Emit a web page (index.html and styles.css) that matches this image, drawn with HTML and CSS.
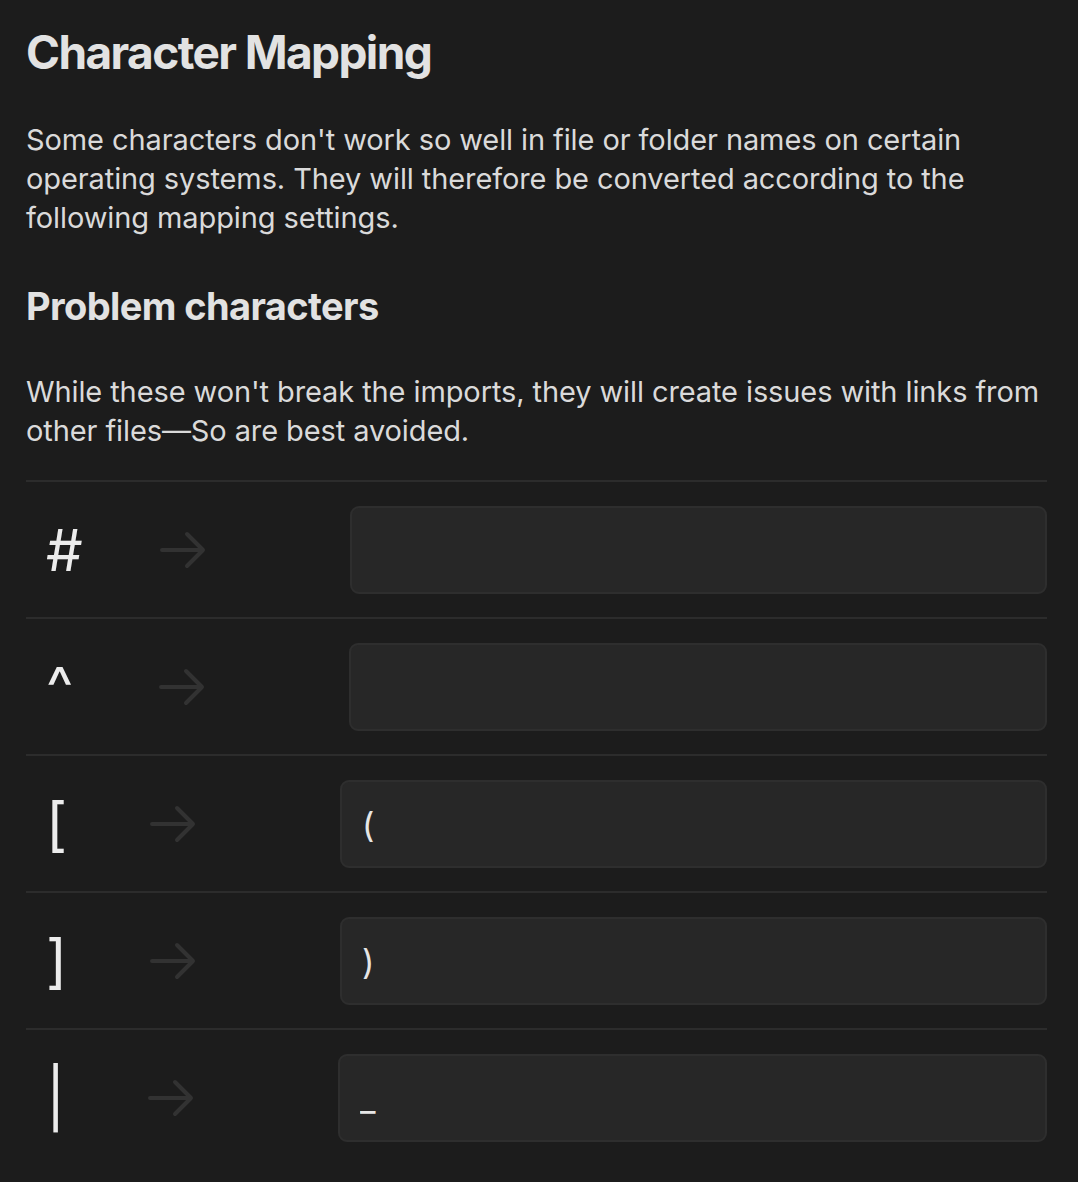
FILE: index.html
```html
<!DOCTYPE html>
<html lang="en">
<head>
<meta charset="utf-8">
<title>Character Mapping</title>
<link rel="stylesheet" href="styles.css">
</head>
<body>
<main class="page">
  <h1 class="title">Character Mapping</h1>
  <p class="desc">Some characters don't work so well in file or folder names on certain operating systems. They will therefore be converted according to the following mapping settings.</p>
  <h2 class="subtitle">Problem characters</h2>
  <p class="desc desc-2">While these won't break the imports, they will create issues with links from other files—So are best avoided.</p>
  <div class="rows">
    <div class="row">
      <span class="key key-wide">#</span>
      <svg class="arrow" viewBox="0 0 46 38" width="46" height="38"><path d="M2 19 H43 M27 3 L43 19 L27 35" fill="none" stroke="#323232" stroke-width="4" stroke-linecap="round" stroke-linejoin="round"/></svg>
      <input class="field" type="text" value="">
    </div>
    <div class="row">
      <span class="key key-wide">^</span>
      <svg class="arrow" viewBox="0 0 46 38" width="46" height="38"><path d="M2 19 H43 M27 3 L43 19 L27 35" fill="none" stroke="#323232" stroke-width="4" stroke-linecap="round" stroke-linejoin="round"/></svg>
      <input class="field" type="text" value="">
    </div>
    <div class="row">
      <span class="key">[</span>
      <svg class="arrow" viewBox="0 0 46 38" width="46" height="38"><path d="M2 19 H43 M27 3 L43 19 L27 35" fill="none" stroke="#323232" stroke-width="4" stroke-linecap="round" stroke-linejoin="round"/></svg>
      <input class="field" type="text" value="(">
    </div>
    <div class="row">
      <span class="key">]</span>
      <svg class="arrow" viewBox="0 0 46 38" width="46" height="38"><path d="M2 19 H43 M27 3 L43 19 L27 35" fill="none" stroke="#323232" stroke-width="4" stroke-linecap="round" stroke-linejoin="round"/></svg>
      <input class="field" type="text" value=")">
    </div>
    <div class="row">
      <span class="key key-narrow">|</span>
      <svg class="arrow" viewBox="0 0 46 38" width="46" height="38"><path d="M2 19 H43 M27 3 L43 19 L27 35" fill="none" stroke="#323232" stroke-width="4" stroke-linecap="round" stroke-linejoin="round"/></svg>
      <input class="field" type="text" value="_">
    </div>
  </div>
</main>
</body>
</html>
```
FILE: styles.css
```css
html, body {
  margin: 0;
  padding: 0;
  background: #1c1c1c;
}
body {
  font-family: Inter, "Noto Sans", sans-serif;
  color: #dadada;
}
.page {
  padding: 26px 31px 0 26px;
}
.title {
  margin: 0;
  font-size: 46px;
  font-weight: 700;
  letter-spacing: -1.6px;
  line-height: 52px;
  color: #e2e2e2;
}
.desc {
  margin: 42px -20px 0 0;
  font-size: 29px;
  line-height: 39px;
  font-weight: 400;
  letter-spacing: -0.1px;
}
.subtitle {
  margin: 46px 0 0;
  font-size: 38px;
  line-height: 46px;
  font-weight: 700;
  letter-spacing: -0.6px;
  color: #e2e2e2;
}
.desc-2 {
  margin-top: 43px;
}
.rows {
  margin-top: 30px;
}
.row {
  display: flex;
  align-items: center;
  border-top: 2px solid #2c2c2c;
  padding: 24px 0 23px 20px;
}
.key {
  font-size: 58px;
  line-height: 60px;
  font-weight: 400;
  color: #ececec;
  min-width: 27px;
}
.key-wide {
  min-width: 36px;
}
.key-narrow {
  min-width: 25px;
}
.arrow {
  margin-left: 77px;
  flex: none;
}
.field {
  margin-left: 144px;
  flex: 1;
  min-width: 0;
  height: 88px;
  box-sizing: border-box;
  background: #272727;
  border: 2px solid #2e2e2e;
  border-radius: 9px;
  color: #e6e6e6;
  font-family: Inter, sans-serif;
  font-size: 34px;
  padding: 0 20px;
  outline: none;
}
```
